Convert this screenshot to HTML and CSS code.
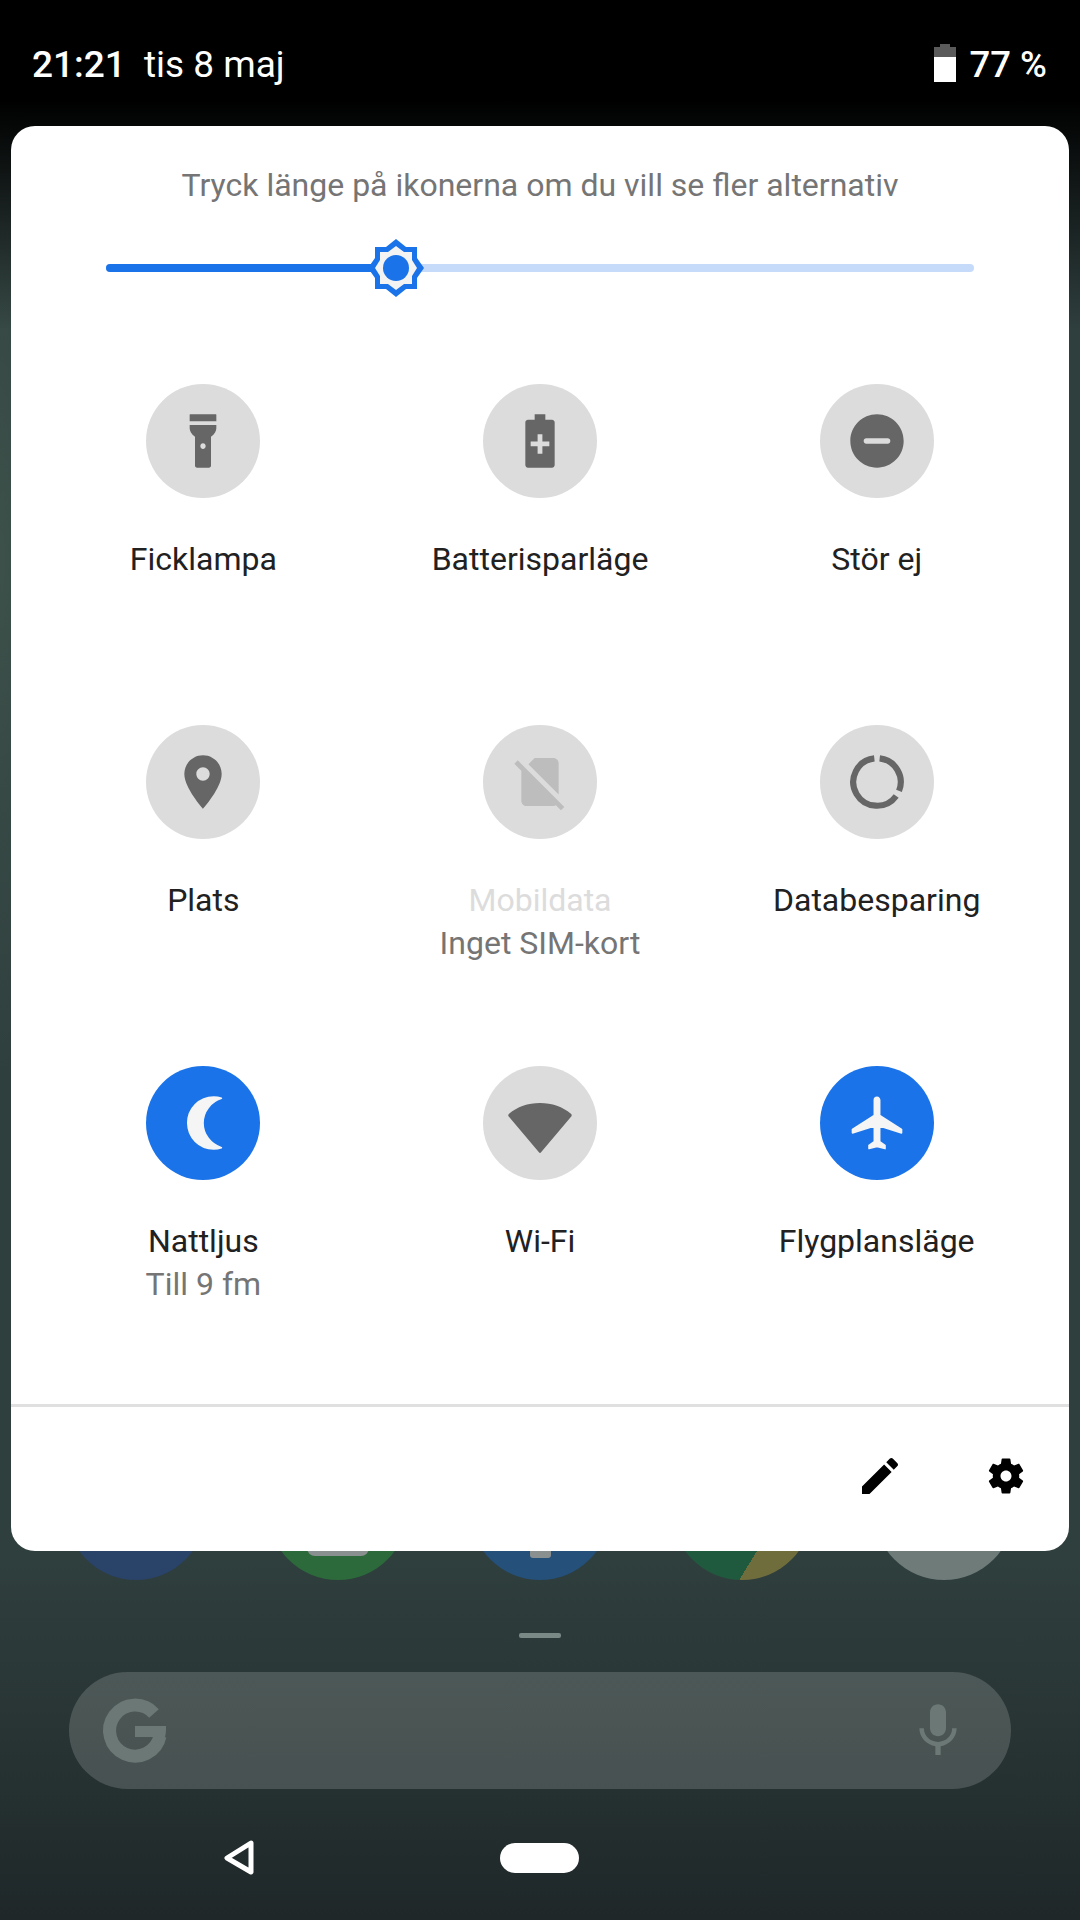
FILE: index.html
```html
<!DOCTYPE html>
<html lang="sv">
  <head>
    <meta charset="UTF-8" />
    <meta name="viewport" content="width=device-width, initial-scale=1.0" />
    <title>Snabbinställningar</title>
    <link rel="stylesheet" href="styles.css">
  </head>
  <body>
    <header class="status-bar">
      <div class="status-left">
        <span class="clock">21:21</span>
        <span class="date">tis 8 maj</span>
      </div>
      <div class="status-right">
        <svg class="battery" viewBox="0 0 22 38">
          <path fill="#5a5a5a" d="M6 0h10v3h6v10H0V3h6z" />
          <path fill="#fff" d="M0 13h22v25H0z" />
        </svg>
        <span class="percent">77 %</span>
      </div>
    </header>

    <section class="panel">
      <p class="hint">Tryck länge på ikonerna om du vill se fler alternativ</p>

      <div class="slider">
        <div class="slider-fill" style="width: 290px"></div>
        <svg class="slider-thumb" viewBox="-30 -30 60 60">
          <path fill="#1a73e8" d="M0-29 10-21H21V-10L28 0 21 10V21H10L0 29-10 21H-21V10L-28 0-21-10V-21H-10Z" />
          <path fill="#f3f3f3" d="M0-22 8-16H16V-8L21 0 16 8V16H8L0 22-8 16H-16V8L-21 0-16-8V-16H-8Z" />
          <circle r="13" fill="#1a73e8" />
        </svg>
      </div>

      <div class="tiles">
        <div class="tile">
          <div class="tile-icon">
            <svg viewBox="0 0 24 24">
              <path d="M7 2.2c0-.1.1-.2.2-.2h9.600c.1 0 .2.1.2.2v2.400H7z" />
              <path d="M7 6h10v1.200c0 1-.6 2.300-2 3.200v10.800c0 .5-.3.800-.8.800H9.800c-.5 0-.8-.3-.8-.8V10.400C7.600 9.500 7 8.200 7 7.200zm5 6.800c-.6 0-1 .5-1 1.100s.4 1.100 1 1.100 1-.5 1-1.100-.4-1.100-1-1.100z" />
            </svg>
          </div>
          <div class="tile-label">Ficklampa</div>
        </div>
        <div class="tile">
          <div class="tile-icon">
            <svg viewBox="0 0 24 24">
              <path d="M16.500 4H14V2h-4v2H7.500c-.5 0-1 .4-1 1v16c0 .6.500 1 1 1h9c.5 0 1-.4 1-1V5c0-.6-.5-1-1-1zM15.500 14h-2.600v2.800h-1.800V14H8.500v-1.800h2.600V9.500h1.800v2.700h2.600z" />
            </svg>
          </div>
          <div class="tile-label">Batterisparläge</div>
        </div>
        <div class="tile">
          <div class="tile-icon">
            <svg viewBox="0 0 24 24">
              <path d="M12 2C6.480 2 2 6.480 2 12s4.480 10 10 10 10-4.480 10-10S17.520 2 12 2zm4 11H8c-.6 0-1-.4-1-1s.4-1 1-1h8c.6 0 1 .4 1 1s-.4 1-1 1z" />
            </svg>
          </div>
          <div class="tile-label">Stör ej</div>
        </div>

        <div class="tile">
          <div class="tile-icon">
            <svg viewBox="0 0 24 24">
              <path d="M12 2C8.130 2 5 5.130 5 9c0 5.250 7 13 7 13s7-7.750 7-13c0-3.870-3.130-7-7-7zm0 9.500c-1.380 0-2.500-1.120-2.500-2.500s1.120-2.500 2.500-2.500 2.500 1.120 2.500 2.500-1.120 2.500-2.500 2.500z" />
            </svg>
          </div>
          <div class="tile-label">Plats</div>
        </div>
        <div class="tile">
          <div class="tile-icon tile-icon-off">
            <svg viewBox="0 0 24 24">
              <path d="M18.990 5c0-1.100-.89-2-1.990-2h-7L7.660 5.340 19 16.680 18.990 5zM3.650 3.880 2.380 5.150 5 7.770V19c0 1.100.9 2 2 2h10.010c.35 0 .67-.1.96-.26l1.880 1.880 1.270-1.270L3.650 3.880z" />
            </svg>
          </div>
          <div class="tile-label tile-label-off">Mobildata</div>
          <div class="tile-sub">Inget SIM-kort</div>
        </div>
        <div class="tile">
          <div class="tile-icon">
            <svg class="ring" viewBox="0 0 24 24">
              <path d="M13 3.150A8.900 8.900 0 0 1 20.250 15.330" />
              <path d="M19.200 17.230A8.900 8.900 0 1 1 11 3.150" />
            </svg>
          </div>
          <div class="tile-label">Databesparing</div>
        </div>

        <div class="tile">
          <div class="tile-icon tile-icon-on">
            <svg viewBox="0 0 24 24">
              <path class="soft" transform="matrix(-1 0 0 1 25 0)" d="M9 2.300c-1 0-2 .15-2.900.45 4 1.250 6.900 5 6.900 9.250s-2.900 8-6.900 9.250c.9.300 1.900.45 2.900.45 5.400 0 9.700-4.300 9.700-9.700S14.400 2.300 9 2.300z" />
            </svg>
          </div>
          <div class="tile-label">Nattljus</div>
          <div class="tile-sub">Till 9 fm</div>
        </div>
        <div class="tile">
          <div class="tile-icon">
            <svg viewBox="0 0 24 24">
              <path d="M12 4.500C7.500 4.500 3.400 6 .4 8.500c-.3.250-.4.600-.2.950L11.600 23c.2.300.6.300.8 0L23.800 9.450c.2-.35.1-.7-.2-.95C20.600 6 16.500 4.500 12 4.500z" />
            </svg>
          </div>
          <div class="tile-label">Wi-Fi</div>
        </div>
        <div class="tile">
          <div class="tile-icon tile-icon-on">
            <svg viewBox="0 0 24 24">
              <path class="soft" transform="translate(.5 0)" d="M20.700 15.700v-1.300l-8.200-5.200V3.500c0-.6-.4-1.100-1-1.100s-1 .5-1 1.100v5.700l-8.200 5.200v1.300l8.200-2.600V19l-2 1.400v1.200l3-.8 3 .8v-1.200l-2-1.400v-5.900z" />
            </svg>
          </div>
          <div class="tile-label">Flygplansläge</div>
        </div>
      </div>

      <footer class="panel-footer">
        <svg class="footer-icon" viewBox="0 0 24 24">
          <path d="M3 17.250V21h3.750L17.810 9.940l-3.750-3.750L3 17.250zM20.710 7.040c.39-.39.39-1.020 0-1.410l-2.340-2.340c-.39-.39-1.020-.39-1.410 0l-1.830 1.830 3.750 3.750 1.830-1.830z" />
        </svg>
        <svg class="footer-icon footer-gear" viewBox="0 0 24 24">
          <path d="M19.140 12.940c.04-.3.06-.61.06-.94 0-.32-.02-.64-.07-.94l2.030-1.580c.18-.14.23-.41.12-.61l-1.920-3.320c-.12-.22-.37-.29-.59-.22l-2.390.96c-.5-.38-1.030-.7-1.620-.94l-.36-2.540c-.04-.24-.24-.41-.48-.41h-3.840c-.24 0-.43.17-.47.41l-.36 2.540c-.59.24-1.130.57-1.620.94l-2.390-.96c-.22-.08-.47 0-.59.22L2.740 8.870c-.12.21-.08.47.12.61l2.030 1.580c-.05.3-.09.63-.09.94s.02.64.07.94l-2.030 1.580c-.18.14-.23.41-.12.61l1.920 3.320c.12.22.37.29.59.22l2.390-.96c.5.38 1.030.7 1.620.94l.36 2.540c.05.24.24.41.48.41h3.840c.24 0 .44-.17.47-.41l.36-2.540c.59-.24 1.130-.56 1.620-.94l2.390.96c.22.08.47 0 .59-.22l1.920-3.320c.12-.22.07-.47-.12-.61l-2.010-1.580zM12 15c-1.650 0-3-1.350-3-3s1.350-3 3-3 3 1.350 3 3-1.350 3-3 3z" />
        </svg>
      </footer>
    </section>

    <main class="home">
      <div class="dock">
        <div class="app app-navy"></div>
        <div class="app app-green"><span class="app-mark app-mark-wide"></span></div>
        <div class="app app-blue"><span class="app-mark"></span></div>
        <div class="app app-maps"></div>
        <div class="app app-grey"></div>
      </div>

      <div class="handle"></div>

      <div class="search">
        <svg class="search-g" viewBox="0 0 64 64">
          <path class="search-g-arc" d="M51 14.500A25.500 25.500 0 1 0 57 37" />
          <path class="search-g-bar" d="M32 27h31v3c0 3-.3 5.500-1 8H32z" />
        </svg>
        <svg class="search-mic" viewBox="0 0 24 24">
          <path d="M12 14c1.660 0 3-1.340 3-3V5c0-1.660-1.340-3-3-3S9 3.340 9 5v6c0 1.660 1.340 3 3 3zm5.300-3c0 3-2.540 5.100-5.300 5.100S6.700 14 6.700 11H5c0 3.410 2.720 6.230 6 6.720V21h2v-3.280c3.280-.48 6-3.300 6-6.720h-1.700z" />
        </svg>
      </div>

      <nav class="nav-bar">
        <svg class="nav-back" viewBox="0 0 32 38">
          <path d="M28 4 4 19l24 14z" />
        </svg>
        <div class="nav-home"></div>
      </nav>
    </main>
  </body>
</html>
```

FILE: styles.css
```css
* {
  box-sizing: border-box;
}

body {
  width: 1080px;
  height: 1920px;
  margin: 0;
  overflow: hidden;
  font-family: Roboto, "Noto Sans", sans-serif;
  color: #212121;
  background:
    linear-gradient(to bottom, #000 0, #000 100px, rgba(0, 0, 0, 0) 330px),
    radial-gradient(ellipse 70px 520px at 0 560px, rgba(95, 125, 105, 0.3), rgba(95, 125, 105, 0)),
    linear-gradient(to bottom, #2f3f3e 0, #2f3f3e 1560px, #283534 1720px, #1f2729 1920px);
}

svg {
  display: block;
  overflow: visible;
}

/* Barra de estado */
.status-bar {
  height: 126px;
  padding: 0 33px 0 32px;
  display: flex;
  justify-content: space-between;
  align-items: center;
  color: white;
  font-size: 37px;
}

.status-left {
  display: flex;
  gap: 18px;
  margin-top: 3px;
}

.clock {
  font-weight: 500;
}

.status-right {
  display: flex;
  align-items: center;
  gap: 14px;
  font-size: 36.5px;
  font-weight: 500;
}

.percent {
  margin-top: 3px;
}

.battery {
  width: 22px;
  height: 38px;
}

/* Panel */
.panel {
  position: relative;
  z-index: 1;
  height: 1425px;
  margin: 0 11px;
  padding-top: 39px;
  background-color: white;
  border-radius: 24px;
}

.hint {
  margin: 0;
  font-size: 32px;
  line-height: 40px;
  text-align: center;
  color: #757575;
}

.slider {
  position: relative;
  height: 8px;
  margin: 59px 95px 0;
  background-color: #c6dafa;
  border-radius: 4px;
}

.slider-fill {
  height: 100%;
  background-color: #1a73e8;
  border-radius: 4px 0 0 4px;
}

.slider-thumb {
  position: absolute;
  left: 260px;
  top: -26px;
  width: 60px;
  height: 60px;
}

.tiles {
  display: grid;
  grid-template-columns: repeat(3, 1fr);
  grid-template-rows: 341px 341px 338px;
  margin-top: 112px;
  padding: 0 24px;
}

.tile {
  display: flex;
  flex-direction: column;
  align-items: center;
  font-size: 32px;
  line-height: 43px;
  text-align: center;
}

.tile-icon {
  width: 114px;
  height: 114px;
  margin-bottom: 40px;
  display: flex;
  justify-content: center;
  align-items: center;
  background-color: #dcdcdc;
  border-radius: 50%;
}

.tile-icon svg {
  width: 64px;
  height: 64px;
  fill: #666;
}

.tile-icon-on {
  background-color: #1a73e8;
}

.tile-icon-on svg {
  fill: #f5f5f5;
}

.tile-icon-off svg {
  fill: #bdbdbd;
}

.tile-icon .ring {
  fill: none;
  stroke: #666;
  stroke-width: 2.300;
}

.soft {
  stroke: #f5f5f5;
  stroke-width: 0.600;
  stroke-linejoin: round;
}

.tile-label-off {
  color: #dcdcdc;
}

.tile-sub {
  color: #757575;
}

.panel-footer {
  height: 147px;
  padding: 0 41px 6px 0;
  display: flex;
  justify-content: flex-end;
  align-items: center;
  gap: 80px;
  border-top: 3px solid #e0e0e0;
}

.footer-icon {
  width: 48px;
  height: 48px;
  fill: #000;
}

.footer-gear {
  width: 44px;
  height: 44px;
}

/* Pantalla de inicio */
.home {
  display: flex;
  flex-direction: column;
  align-items: center;
}

.dock {
  display: flex;
  justify-content: center;
  gap: 62px;
  margin-top: -111px;
}

.app {
  width: 140px;
  height: 140px;
  display: flex;
  justify-content: center;
  align-items: flex-end;
  padding-bottom: 22px;
  border-radius: 50%;
}

.app-navy {
  background-color: #2a4368;
}

.app-green {
  background-color: #2c6a3b;
}

.app-blue {
  background-color: #25507a;
}

.app-maps {
  background: linear-gradient(121deg, #205a3e 67.6%, #6f6d3c 67.6%);
}

.app-grey {
  background-color: #6e7b78;
}

.app-mark {
  width: 21px;
  height: 12px;
  background-color: #8a8f8f;
  border-radius: 0 0 3px 3px;
}

.app-mark-wide {
  width: 62px;
  height: 8px;
  margin-bottom: 2px;
  border-radius: 0 0 30px 30px;
}

.handle {
  width: 42px;
  height: 5px;
  margin-top: 53px;
  background-color: #7a8886;
  border-radius: 2px;
}

.search {
  width: 942px;
  height: 117px;
  margin-top: 34px;
  padding: 0 41px 0 34px;
  display: flex;
  justify-content: space-between;
  align-items: center;
  background-color: rgba(255, 255, 255, 0.16);
  border-radius: 59px;
}

.search-g {
  width: 64px;
  height: 64px;
}

.search-g-arc {
  fill: none;
  stroke: #6b7876;
  stroke-width: 13;
}

.search-g-bar {
  fill: #6b7876;
}

.search-mic {
  width: 64px;
  height: 64px;
  fill: #6b7876;
}

.nav-bar {
  display: grid;
  grid-template-columns: repeat(3, 300px);
  justify-items: center;
  align-items: center;
  margin-top: 50px;
  padding-right: 2px;
}

.nav-back {
  width: 32px;
  height: 38px;
  fill: none;
  stroke: white;
  stroke-width: 5;
  stroke-linejoin: round;
}

.nav-home {
  width: 79px;
  height: 30px;
  background-color: white;
  border-radius: 15px;
}
```
